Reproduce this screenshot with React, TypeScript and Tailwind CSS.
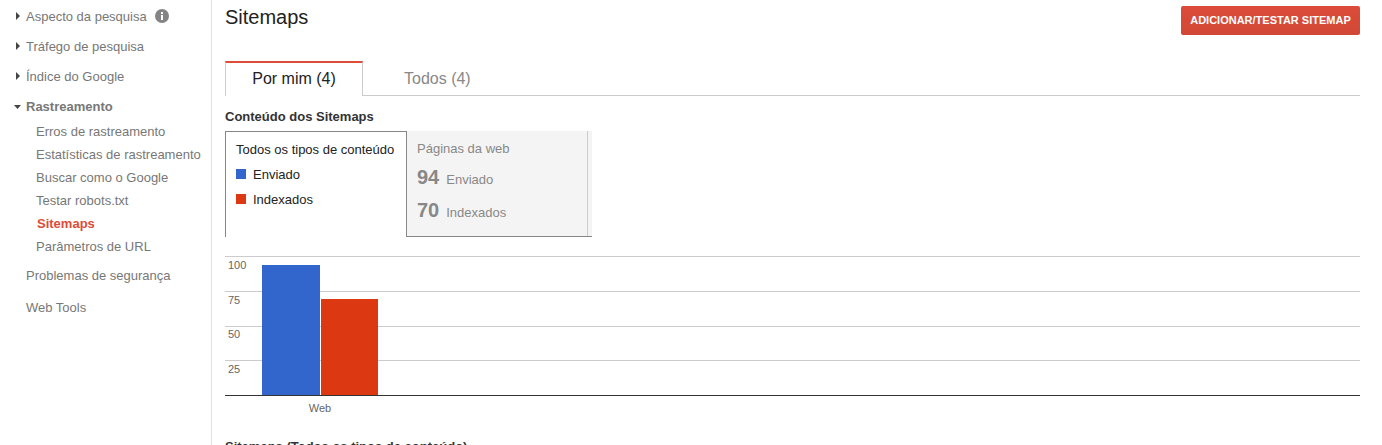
const topItems = [
  { label: "Aspecto da pesquisa", info: true },
  { label: "Tráfego de pesquisa", info: false },
  { label: "Índice do Google", info: false },
];

const crawlItems = [
  "Erros de rastreamento",
  "Estatísticas de rastreamento",
  "Buscar como o Google",
  "Testar robots.txt",
  "Sitemaps",
  "Parâmetros de URL",
];

const gridLines = [
  { y: 0, label: "100", base: 13 },
  { y: 35, label: "75", base: 48 },
  { y: 70, label: "50", base: 82 },
  { y: 104, label: "25", base: 117 },
];

function InfoIcon() {
  return (
    <svg className="-mt-0.5 ml-2 h-[14px] w-[14px]" viewBox="0 0 14 14">
      <circle cx="7" cy="7" r="7" fill="#848484" />
      <rect x="6" y="3" width="2" height="2" fill="#fff" />
      <rect x="6" y="6" width="2" height="5" fill="#fff" />
    </svg>
  );
}

function Sidebar() {
  return (
    <nav className="w-[212px] shrink-0 border-r border-[#e2e2e2] pt-0.5 text-[13px] text-[#777]">
      {topItems.map((item) => (
        <div key={item.label} className="flex h-[30px] items-center pl-4">
          <svg className="-mt-0.5 mr-1.5 h-2 w-1" viewBox="0 0 4 8">
            <path d="M0 0L4 4L0 8z" fill="#444" />
          </svg>
          <span>{item.label}</span>
          {item.info && <InfoIcon />}
        </div>
      ))}
      <div className="flex h-[30px] items-center pl-3.5 font-bold">
        <svg className="mr-[5px] h-1 w-[7px]" viewBox="0 0 7 4">
          <path d="M0 0H7L3.5 4z" fill="#444" />
        </svg>
        Rastreamento
      </div>
      <ul className="-mt-0.5 pl-9">
        {crawlItems.map((label) => (
          <li
            key={label}
            className={
              label === "Sitemaps"
                ? "h-[23px] pl-px font-bold leading-[23px] text-[#dd4b39]"
                : "h-[23px] whitespace-nowrap leading-[23px]"
            }
          >
            {label}
          </li>
        ))}
      </ul>
      <div className="mt-px h-[32px] pl-[26px] leading-[34px]">Problemas de segurança</div>
      <div className="h-[30px] pl-[26px] leading-[34px]">Web Tools</div>
    </nav>
  );
}

function ContentCards() {
  return (
    <div className="flex h-[106px] w-[367px] text-[13px]">
      <div className="w-[182px] border border-b-0 border-[#888] pl-2.5 pt-[5px] text-[#222]">
        <div className="h-[25px] whitespace-nowrap leading-[25px]">Todos os tipos de conteúdo</div>
        <div className="flex h-[25px] items-center">
          <span className="-mt-px mr-[7px] h-2.5 w-2.5 bg-[#3366cc]" />
          Enviado
        </div>
        <div className="flex h-[25px] items-center">
          <span className="-mt-px mr-[7px] h-2.5 w-2.5 bg-[#dc3912]" />
          Indexados
        </div>
      </div>
      <div className="flex flex-1 border-b border-[#888] bg-[#f4f4f4] text-[#888]">
        <div className="w-[181px] border-r border-[#ccc] pl-2.5 pt-[5px]">
          <div className="h-[25px] leading-[25px]">Páginas da web</div>
          <div className="flex h-[33px] items-baseline leading-[33px]">
            <b className="mr-[7px] text-[20px]">94</b>Enviado
          </div>
          <div className="flex h-[33px] items-baseline leading-[33px]">
            <b className="mr-[7px] text-[20px]">70</b>Indexados
          </div>
        </div>
      </div>
    </div>
  );
}

function Chart() {
  return (
    <svg className="mt-[19px] block h-[160px] w-[1135px]" viewBox="0 0 1135 160" fontSize="11" fill="#666">
      {gridLines.map((line) => (
        <g key={line.label}>
          <rect x="0" y={line.y} width="1135" height="1" fill="#ccc" />
          <text x="3" y={line.base}>{line.label}</text>
        </g>
      ))}
      <rect x="37" y="9" width="58" height="130" fill="#3366cc" />
      <rect x="96" y="43" width="57" height="96" fill="#dc3912" />
      <rect x="0" y="139" width="1135" height="1" fill="#333" />
      <text x="95" y="156" textAnchor="middle">Web</text>
    </svg>
  );
}

export default function App() {
  return (
    <div className="flex h-[445px] w-[1382px] overflow-hidden bg-white font-['Liberation_Sans',Arial,sans-serif]">
      <Sidebar />
      <main className="w-[1157px] pl-[13px]">
        <div className="w-[1135px]">
          <header className="flex h-[61px] items-start justify-between">
            <h1 className="pt-[3px] text-[20px] leading-7 text-[#222]">Sitemaps</h1>
            <button className="mt-1.5 h-[29px] w-[179px] whitespace-nowrap rounded-[2px] bg-linear-to-b from-[#dd4b39] to-[#d14836] text-[11px] font-bold text-white">
              ADICIONAR/TESTAR SITEMAP
            </button>
          </header>
          <div className="flex h-[35px] text-[16px]">
            <div className="w-[138px] border-x border-t-2 border-x-[#ccc] border-t-[#dd4b39] text-center leading-[31px] text-[#222]">
              Por mim (4)
            </div>
            <div className="flex-1 border-b border-[#ccc] pl-[41px] leading-[35px] text-[#888]">Todos (4)</div>
          </div>
          <h2 className="h-[35px] pt-[10px] text-[13px] font-bold leading-[21px] text-[#333]">Conteúdo dos Sitemaps</h2>
          <ContentCards />
          <Chart />
          <h2 className="mt-[21px] text-[13px] font-bold leading-5 text-[#333]">Sitemaps (Todos os tipos de conteúdo)</h2>
        </div>
      </main>
    </div>
  );
}
